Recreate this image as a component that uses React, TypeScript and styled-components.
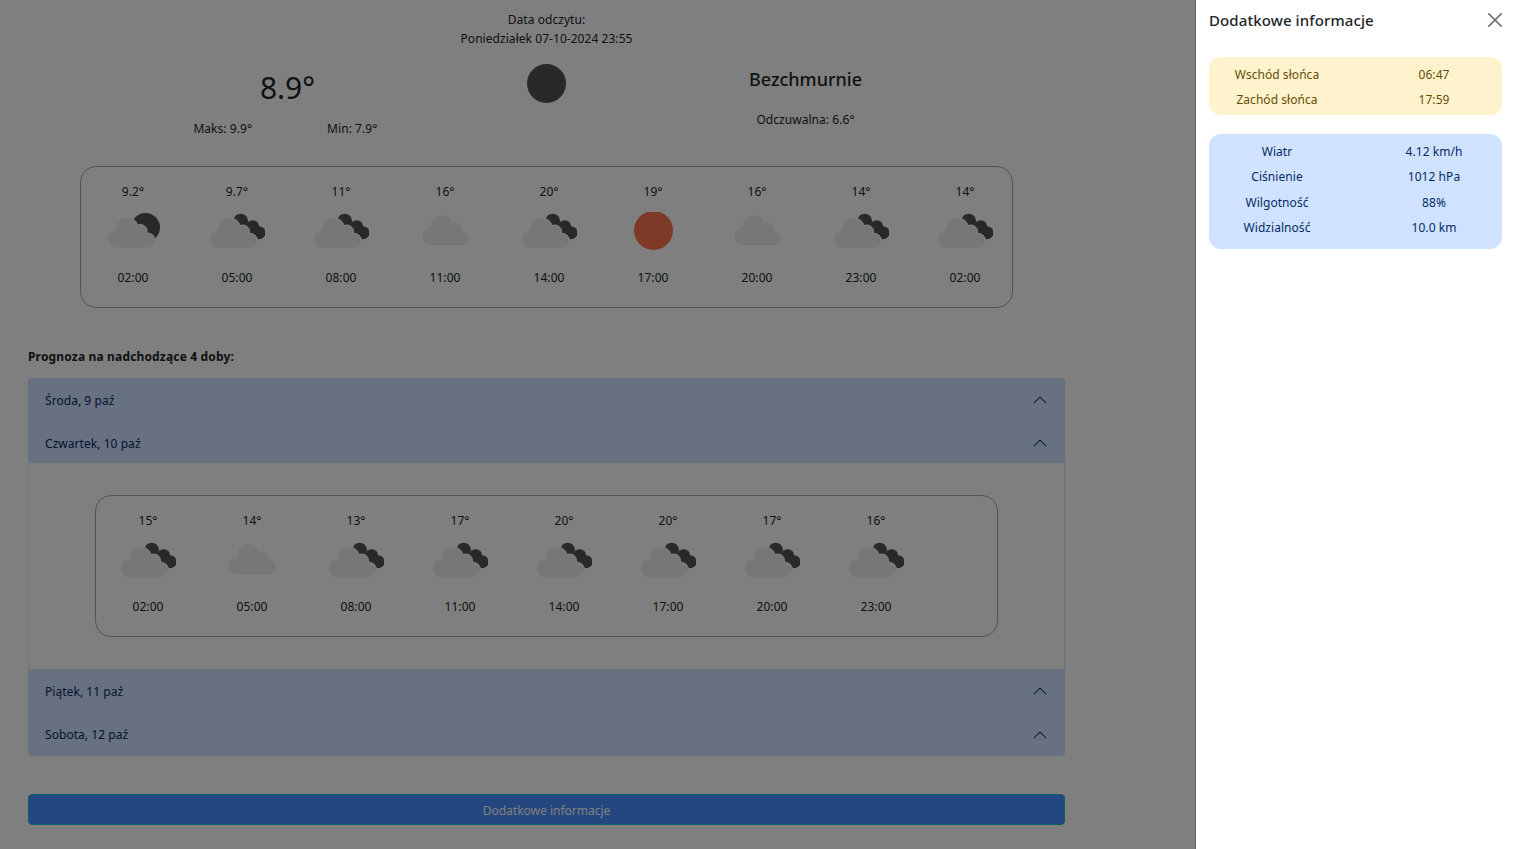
import React from 'react';
import styled, { createGlobalStyle } from 'styled-components';

type Kind = 'cloudMoon' | 'partly' | 'cloud' | 'sun';

interface ForecastEntry {
  temp: string;
  time: string;
  kind: Kind;
}

const today: ForecastEntry[] = [
  { temp: '9.2°', time: '02:00', kind: 'cloudMoon' },
  { temp: '9.7°', time: '05:00', kind: 'partly' },
  { temp: '11°', time: '08:00', kind: 'partly' },
  { temp: '16°', time: '11:00', kind: 'cloud' },
  { temp: '20°', time: '14:00', kind: 'partly' },
  { temp: '19°', time: '17:00', kind: 'sun' },
  { temp: '16°', time: '20:00', kind: 'cloud' },
  { temp: '14°', time: '23:00', kind: 'partly' },
  { temp: '14°', time: '02:00', kind: 'partly' },
];

const thursday: ForecastEntry[] = [
  { temp: '15°', time: '02:00', kind: 'partly' },
  { temp: '14°', time: '05:00', kind: 'cloud' },
  { temp: '13°', time: '08:00', kind: 'partly' },
  { temp: '17°', time: '11:00', kind: 'partly' },
  { temp: '20°', time: '14:00', kind: 'partly' },
  { temp: '20°', time: '17:00', kind: 'partly' },
  { temp: '17°', time: '20:00', kind: 'partly' },
  { temp: '16°', time: '23:00', kind: 'partly' },
];

const GlobalStyle = createGlobalStyle`
  html, body {
    margin: 0;
    height: 100%;
    overflow: hidden;
    background: #fff;
  }

  body {
    font-family: "Noto Sans", "Open Sans", sans-serif;
    font-size: 12px;
    line-height: 19px;
    letter-spacing: 0.05px;
    color: #212529;
  }
`;

const Main = styled.main`
  width: 1037px;
  margin-left: 28px;
  padding-top: 10px;
`;

const ReadingDate = styled.div`
  text-align: center;
`;

const Summary = styled.section`
  display: grid;
  grid-template-columns: repeat(3, 259px);
  justify-content: center;
  margin-bottom: 28px;
  text-align: center;
`;

const SummaryColumn = styled.div`
  padding-top: 18px;
`;

const MoonColumn = styled.div`
  display: flex;
  justify-content: center;
  padding-top: 16px;
`;

const Temperature = styled.div`
  font-size: 30px;
  line-height: 43px;
  letter-spacing: 0;
`;

const MinMax = styled.div`
  display: grid;
  grid-template-columns: 1fr 1fr;
  margin-top: 10px;
`;

const Condition = styled.div`
  font-size: 18px;
  font-weight: 500;
  line-height: 26px;
  letter-spacing: 0;
`;

const Feels = styled.div`
  margin-top: 18px;
`;

const ForecastBox = styled.div<{ $width: number }>`
  box-sizing: border-box;
  display: flex;
  width: ${({ $width }) => $width}px;
  height: 142px;
  margin: 0 auto;
  padding-top: 15px;
  border: 1px solid #a8a8a8;
  border-radius: 16px;
`;

const ForecastItem = styled.div`
  display: flex;
  flex-direction: column;
  align-items: center;
  width: 104px;
  flex: none;
`;

const IconSlot = styled.svg`
  display: block;
  margin: 11px 0 18px;
`;

const SectionTitle = styled.h2`
  margin: 39px 0 12px;
  font-size: 12px;
  font-weight: 700;
  line-height: 19px;
  letter-spacing: 0.16px;
`;

const Accordion = styled.div`
  border-radius: 4px;
  overflow: hidden;
`;

const AccordionHeader = styled.div<{ $open?: boolean }>`
  display: flex;
  align-items: center;
  justify-content: space-between;
  box-sizing: border-box;
  height: ${({ $open }) => ($open ? 42 : 43)}px;
  padding: 2px 17px 0;
  background: #cfe2ff;
  color: #052c65;
  border-bottom: ${({ $open }) => ($open ? 'none' : '1px solid #cbddf9')};

  &:last-child {
    height: 44px;
    padding-top: 1px;
    border-bottom: none;
  }
`;

const AccordionBody = styled.div`
  box-sizing: border-box;
  height: 206px;
  padding-top: 32px;
  border: solid #dee2e6;
  border-width: 0 1px;
`;

const ShowMore = styled.button`
  display: block;
  box-sizing: border-box;
  width: 100%;
  height: 31px;
  margin-top: 38px;
  padding: 1px 0 0;
  border: 1px solid #0dc6d0;
  border-radius: 4px;
  background: #488efe;
  color: #fff;
  font: inherit;
`;

const Backdrop = styled.div`
  position: fixed;
  inset: 0;
  background: rgba(0, 0, 0, 0.5);
`;

const Panel = styled.aside`
  position: fixed;
  top: 0;
  right: 0;
  bottom: 0;
  box-sizing: border-box;
  width: 320px;
  padding: 0 13px;
  background: #fff;
  border-left: 1px solid #666;
`;

const PanelHeader = styled.header`
  display: flex;
  align-items: center;
  justify-content: space-between;
  height: 39px;
  margin-bottom: 18px;
`;

const PanelTitle = styled.h3`
  margin: 0;
  font-size: 15px;
  font-weight: 500;
  line-height: 20px;
  letter-spacing: 0.1px;
`;

const CloseButton = styled.button`
  display: flex;
  padding: 0;
  border: none;
  background: none;
  color: #777;
`;

const InfoCard = styled.div<{ $tone: 'sun' | 'air' }>`
  display: grid;
  grid-template-columns: 136px 136px;
  justify-content: space-between;
  row-gap: ${({ $tone }) => ($tone === 'sun' ? 6 : 6.3)}px;
  width: 293px;
  margin-bottom: 19px;
  padding: ${({ $tone }) => ($tone === 'sun' ? '8px 0 6px' : '8px 0 12px')};
  border-radius: 12px;
  text-align: center;
  background: ${({ $tone }) => ($tone === 'sun' ? '#fff3cd' : '#cfe2ff')};
  color: ${({ $tone }) => ($tone === 'sun' ? '#664d03' : '#052c65')};
`;

const CloudLobes = () => (
  <>
    <circle cx={19.3} cy={11} r={10.7} />
    <circle cx={32.7} cy={14} r={6.5} />
    <circle cx={8.7} cy={21.3} r={8.7} />
    <circle cx={40} cy={23} r={7} />
    <rect x={8.7} y={18} width={31.3} height={12} />
  </>
);

const cloudOffset: Record<Exclude<Kind, 'sun'>, string> = {
  cloudMoon: 'translate(2.5 5.5)',
  partly: 'translate(1 6)',
  cloud: 'translate(5 3)',
};

const WeatherIcon: React.FC<{ kind: Kind }> = ({ kind }) => {
  const dark = '#525252';

  if (kind === 'sun') {
    return (
      <IconSlot width={56} height={38} viewBox="0 0 56 38">
        <circle cx={28.5} cy={18.5} r={19.5} fill="#fc744e" />
      </IconSlot>
    );
  }

  return (
    <IconSlot width={56} height={38} viewBox="0 0 56 38">
      {kind === 'cloudMoon' && <circle cx={40.5} cy={15.5} r={14.5} fill={dark} />}
      {kind === 'partly' && (
        <>
          <circle cx={31.7} cy={9} r={7.3} fill={dark} />
          <circle cx={43.7} cy={14.7} r={6.5} fill={dark} />
          <circle cx={50} cy={20.7} r={6.5} fill={dark} />
        </>
      )}
      <g transform={cloudOffset[kind]}>
        {kind !== 'cloud' && (
          <g fill="#fff" stroke="#fff" strokeWidth={2}>
            <CloudLobes />
          </g>
        )}
        <g fill="#eeeeea">
          <CloudLobes />
        </g>
      </g>
    </IconSlot>
  );
};

const Chevron = () => (
  <svg width={16} height={16} viewBox="0 0 16 16" fill="currentColor" style={{ transform: 'rotate(180deg)' }}>
    <path d="M1.646 4.646a.5.5 0 0 1 .708 0L8 10.293l5.646-5.647a.5.5 0 0 1 .708.708l-6 6a.5.5 0 0 1-.708 0l-6-6a.5.5 0 0 1 0-.708z" />
  </svg>
);

const Forecast: React.FC<{ items: ForecastEntry[]; width: number }> = ({ items, width }) => (
  <ForecastBox $width={width}>
    {items.map((item, i) => (
      <ForecastItem key={i}>
        <span>{item.temp}</span>
        <WeatherIcon kind={item.kind} />
        <span>{item.time}</span>
      </ForecastItem>
    ))}
  </ForecastBox>
);

const App: React.FC = () => (
  <>
    <GlobalStyle />
    <Main>
      <ReadingDate>
        Data odczytu:
        <br />
        Poniedziałek 07-10-2024 23:55
      </ReadingDate>

      <Summary>
        <SummaryColumn>
          <Temperature>8.9°</Temperature>
          <MinMax>
            <span>Maks: 9.9°</span>
            <span>Min: 7.9°</span>
          </MinMax>
        </SummaryColumn>
        <MoonColumn>
          <svg width={40} height={40} viewBox="0 0 40 40">
            <circle cx={19.5} cy={19.5} r={19.5} fill="#525252" />
          </svg>
        </MoonColumn>
        <SummaryColumn>
          <Condition>Bezchmurnie</Condition>
          <Feels>Odczuwalna: 6.6°</Feels>
        </SummaryColumn>
      </Summary>

      <Forecast items={today} width={933} />

      <SectionTitle>Prognoza na nadchodzące 4 doby:</SectionTitle>

      <Accordion>
        <AccordionHeader>
          Środa, 9 paź
          <Chevron />
        </AccordionHeader>
        <AccordionHeader $open>
          Czwartek, 10 paź
          <Chevron />
        </AccordionHeader>
        <AccordionBody>
          <Forecast items={thursday} width={903} />
        </AccordionBody>
        <AccordionHeader>
          Piątek, 11 paź
          <Chevron />
        </AccordionHeader>
        <AccordionHeader>
          Sobota, 12 paź
          <Chevron />
        </AccordionHeader>
      </Accordion>

      <ShowMore>Dodatkowe informacje</ShowMore>
    </Main>

    <Backdrop />

    <Panel>
      <PanelHeader>
        <PanelTitle>Dodatkowe informacje</PanelTitle>
        <CloseButton aria-label="Zamknij">
          <svg width={14} height={14} viewBox="0 0 16 16" fill="currentColor">
            <path d="M.293.293a1 1 0 0 1 1.414 0L8 6.586 14.293.293a1 1 0 1 1 1.414 1.414L9.414 8l6.293 6.293a1 1 0 0 1-1.414 1.414L8 9.414l-6.293 6.293a1 1 0 0 1-1.414-1.414L6.586 8 .293 1.707a1 1 0 0 1 0-1.414z" />
          </svg>
        </CloseButton>
      </PanelHeader>

      <InfoCard $tone="sun">
        <span>Wschód słońca</span>
        <span>06:47</span>
        <span>Zachód słońca</span>
        <span>17:59</span>
      </InfoCard>

      <InfoCard $tone="air">
        <span>Wiatr</span>
        <span>4.12 km/h</span>
        <span>Ciśnienie</span>
        <span>1012 hPa</span>
        <span>Wilgotność</span>
        <span>88%</span>
        <span>Widzialność</span>
        <span>10.0 km</span>
      </InfoCard>
    </Panel>
  </>
);

export default App;
